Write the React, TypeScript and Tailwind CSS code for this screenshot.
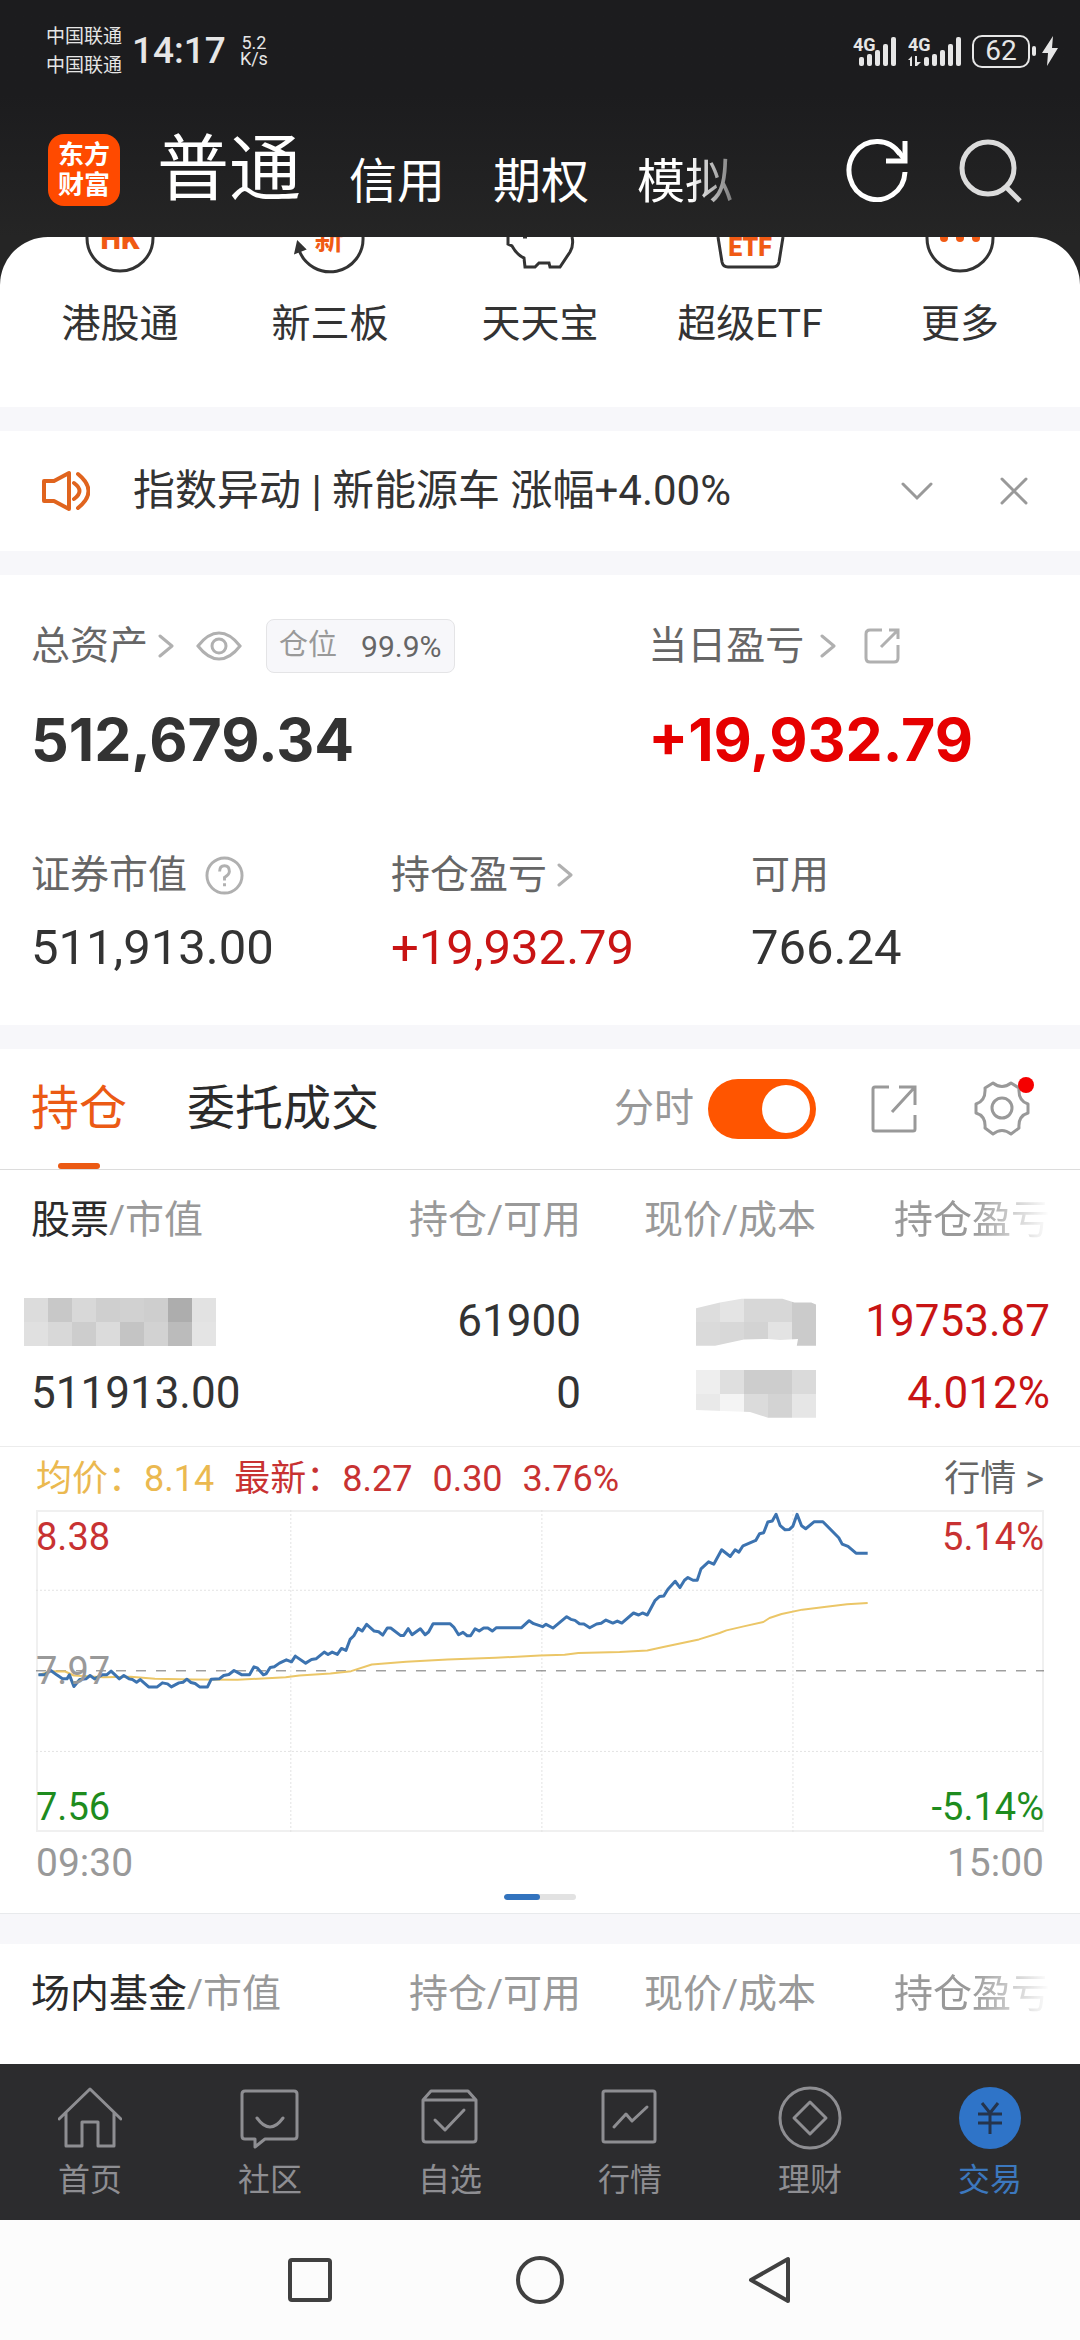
import React, { useState } from 'react';

// --- DATA ---
const accountTabs = ['信用', '期权', '模拟'];

const holdingHeads = ['持仓/可用', '现价/成本', '持仓盈亏'];

const nameMosaic = [
  ['#dcdcdc', '#c8c8c8', '#d8d8d8', '#cfcfcf', '#d1d1d1', '#cecece', '#adadad', '#e2e2e2'],
  ['#e0e0e0', '#d8d8d8', '#cdcdcd', '#dbdbdb', '#c4c4c4', '#d2d2d2', '#bbbbbb', '#e4e4e4'],
];
const priceMosaic = [
  ['#dddddd', '#e4e4e4', '#d7d7d7', '#d7d7d7', '#cbcbcb'],
  ['#dadada', '#d8d8d8', '#d3d3d3', '#e3e3e3', '#cbcbcb'],
];
const costMosaic = [
  ['#eeeeee', '#dfdfdf', '#cdcdcd', '#cdcdcd', '#dadada'],
  ['#e9e9e9', '#f4f4f4', '#dbdbdb', '#d3d3d3', '#e6e6e6'],
];

const pricePoints =
  '112,643 130,643 148,630 165,643 182,655 195,655 202,643 215,678 232,657 250,655 262,645 275,655 297,643 310,643 323,632 347,655 360,645 375,655 385,657 397,665 408,657 432,679 457,679 472,667 487,670 498,679 520,667 532,665 543,656 555,666 567,669 580,679 603,679 614,656 637,655 650,645 665,642 680,630 703,643 725,643 738,619 747,622 765,643 773,640 785,621 797,619 812,608 832,598 847,604 858,587 888,608 905,597 918,595 942,575 953,582 965,575 980,582 992,564 1005,570 1017,537 1028,526 1040,504 1052,512 1065,492 1087,512 1100,514 1112,524 1125,503 1135,503 1163,525 1173,525 1186,505 1197,523 1221,505 1235,523 1245,515 1258,490 1307,490 1318,500 1332,523 1345,516 1357,526 1367,526 1380,505 1392,512 1405,503 1417,503 1430,512 1442,502 1515,502 1537,481 1550,490 1576,499 1586,492 1606,503 1646,469 1658,477 1670,480 1683,490 1696,491 1713,502 1733,491 1746,489 1760,479 1780,488 1793,482 1806,488 1840,458 1855,464 1866,458 1880,464 1903,420 1915,409 1928,407 1940,387 1961,363 1975,382 1988,360 1998,352 2013,360 2025,360 2036,326 2058,305 2073,312 2096,269 2121,289 2135,269 2146,276 2158,257 2195,241 2206,221 2218,218 2230,186 2243,183 2254,163 2266,197 2280,209 2293,208 2303,198 2315,163 2328,197 2340,206 2365,185 2390,185 2436,233 2446,252 2463,259 2486,279 2520,279';

const averagePoints =
  '112,643 148,632 190,633 215,645 300,650 380,649 450,655 560,657 690,658 830,650 870,645 960,639 1020,632 1080,612 1180,604 1300,597 1440,592 1568,585 1640,583 1680,578 1800,575 1880,570 1930,559 2030,537 2090,518 2110,510 2160,498 2217,485 2235,473 2270,461 2330,448 2400,439 2460,432 2520,428';

// --- ICONS ---
const Chevron: React.FC = () => (
  <svg width="16" height="24" viewBox="0 0 16 24" fill="none" stroke="#b0b0b0" strokeWidth="3" strokeLinecap="round" strokeLinejoin="round">
    <path d="M2 2 14 12 2 22" />
  </svg>
);

const SignalIcon: React.FC<{ data?: boolean }> = ({ data }) => (
  <svg width={data ? 54 : 45} height="32" viewBox={data ? '0 0 54 32' : '0 0 45 32'} fill="#e6e6e6">
    <text x="0" y="16" fontSize="18" fontWeight="700" fontFamily="Roboto, sans-serif">4G</text>
    {data && <path d="M0 25 4 21v10H2v-6zM7 21h2v6h4l-4 4H7z" />}
    <g transform={data ? 'translate(10 0)' : undefined}>
      <rect x="6" y="22" width="5" height="9" rx="2" />
      <rect x="14" y="19" width="5" height="12" rx="2" />
      <rect x="22" y="15" width="5" height="16" rx="2" />
      <rect x="30" y="9" width="5" height="22" rx="2" />
      <rect x="38" y="2" width="5" height="29" rx="2" />
    </g>
  </svg>
);

const Mosaic: React.FC<{ rows: string[][]; clip?: string }> = ({ rows, clip }) => (
  <svg
    width={rows[0].length * 24}
    height="48"
    viewBox={`0 0 ${rows[0].length * 24} 48`}
    shapeRendering="crispEdges"
    className={`inline-block align-middle ${clip ?? ''}`}
  >
    {rows.map((row, y) => row.map((fill, x) => (
      <rect key={`${x}-${y}`} x={x * 24} y={y * 24} width="24" height="24" fill={fill} />
    )))}
  </svg>
);

// Lower halves of the shortcut icons, the upper halves are scrolled under the header
const shortcuts = [
  {
    label: '港股通',
    icon: (
      <>
        <circle cx="40" cy="1" r="33" />
        <text x="40" y="12" textAnchor="middle" fontSize="29" fontWeight="900" fontFamily="Roboto, sans-serif" fill="#f05a14" stroke="none">HK</text>
      </>
    ),
  },
  {
    label: '新三板',
    icon: (
      <>
        <path d="M73 0A33 33 0 0 1 9 13" />
        <path d="M8 6 6 15l8-3z" fill="#333" />
        <text x="39" y="13" textAnchor="middle" fontSize="29" fontWeight="700" fontFamily="'Noto Sans CJK SC', sans-serif" fill="#f05a14" stroke="none">新</text>
      </>
    ),
  },
  {
    label: '天天宝',
    icon: <path d="M8 0v7l4 2q5 9 12 12l1 9h10l4-4h10l1 4h10L70 15q4-7 2-15M23 0h4" />,
  },
  {
    label: '超级ETF',
    icon: (
      <>
        <path d="M8 0l4 25q1 5 6 5h45q5 0 6-5l4-25" />
        <text x="40" y="19" textAnchor="middle" fontSize="25" fontWeight="900" fontFamily="Roboto, sans-serif" fill="#f05a14" stroke="none">ETF</text>
      </>
    ),
  },
  {
    label: '更多',
    icon: (
      <>
        <circle cx="40" cy="1" r="33" />
        <g fill="#f05a14" stroke="none">
          <circle cx="24" cy="1" r="4" />
          <circle cx="40" cy="1" r="4" />
          <circle cx="56" cy="1" r="4" />
        </g>
      </>
    ),
  },
];

const navItems = [
  { label: '首页', icon: <path d="M1 33 32 3l31 30M8 27v33h16V36h16v24h16V27" /> },
  {
    label: '社区',
    icon: <path d="M7 5h49q3 0 3 3v42q0 3-3 3H27l-10 8v-8H7q-3 0-3-3V8q0-3 3-3zM19 32q13 18 26 0" />,
  },
  {
    label: '自选',
    icon: <path d="M5 14 13 5h37l8 9v39q0 3-3 3H8q-3 0-3-3zM5 14h53M17 34l10 10 19-20" />,
  },
  {
    label: '行情',
    icon: <path d="M7 5h48q2 0 2 2v47q0 2-2 2H7q-2 0-2-2V7q0-2 2-2zM16 41l12-13 6 7 15-14" />,
  },
  {
    label: '理财',
    icon: (
      <>
        <circle cx="32" cy="32" r="30" />
        <path d="M32 16 48 32 32 48 16 32z" />
      </>
    ),
  },
  {
    label: '交易',
    active: true,
    icon: (
      <>
        <circle cx="32" cy="32" r="31" fill="#2f74c8" stroke="none" />
        <path d="M24 17l8 10 8-10M32 27v21M20 28h24M20 37h24" stroke="#25344c" strokeLinecap="butt" />
      </>
    ),
  },
];

const Divider: React.FC<{ className: string }> = ({ className }) => <div className={`bg-[#f7f7fa] ${className}`}></div>;

// Heading row shared by the stock and the fund tables
const HoldingHead: React.FC<{ name: string }> = ({ name }) => (
  <thead>
    <tr className="text-[39px] leading-[52px] text-[#999]">
      <th scope="col" className="pl-[31px] pt-6 text-left font-normal whitespace-nowrap">
        <span className="text-[#2b2b2b]">{name}</span>/市值
      </th>
      <th scope="col" className="w-[240px] pt-6 text-right font-normal">{holdingHeads[0]}</th>
      <th scope="col" className="w-[235px] pt-6 text-right font-normal">{holdingHeads[1]}</th>
      <th scope="col" className="w-[264px] pt-6 pr-[30px] text-right font-normal whitespace-nowrap">
        <span className="[mask-image:linear-gradient(90deg,#000_50%,transparent_100%)]">{holdingHeads[2]}</span>
      </th>
    </tr>
  </thead>
);

const App: React.FC = () => {
  const [showChart, setShowChart] = useState(true);
  const [showNotice, setShowNotice] = useState(true);

  return (
    <div className="min-h-screen flex flex-col bg-[#252525] text-[#333] font-['Roboto','Noto_Sans_CJK_SC',sans-serif]">
      {/* HEADER */}
      <header className="bg-linear-to-b from-[#1c1c1e] from-40% to-[#252525] text-white">
        <div className="h-[102px] pl-[46px] pr-[22px] flex items-center text-[#e6e6e6]">
          <div className="text-[19px] leading-[29px]">
            <div>中国联通</div>
            <div>中国联通</div>
          </div>
          <div className="ml-2.5 text-[37px] font-medium">14:17</div>
          <div className="ml-3.5 text-[18px] leading-4 text-center">
            <div>5.2</div>
            <div>K/s</div>
          </div>
          <div className="ml-auto flex items-center gap-2.5">
            <SignalIcon />
            <SignalIcon data />
            <div className="flex items-center gap-0.5">
              <div className="w-[58px] h-[33px] rounded-[10px] border-2 border-[#e6e6e6] flex items-center justify-center text-[28px] leading-none">62</div>
              <div className="w-1 h-2.5 rounded-full bg-[#e6e6e6]"></div>
            </div>
            <svg width="16" height="30" viewBox="0 0 16 30" fill="#e6e6e6" className="-ml-1"><path d="M11 0 0 17h6L5 30 16 12h-6z" /></svg>
          </div>
        </div>

        <div className="h-[135px] pl-12 pr-[58px] flex items-center">
          <div className="size-[72px] rounded-2xl bg-[#ff4a00] flex flex-col items-center justify-center text-[26px] leading-[30px] font-bold">
            <span>东方</span>
            <span>财富</span>
          </div>
          <nav className="ml-[37px] pb-[31px] flex-1 self-stretch flex items-end gap-12 leading-none whitespace-nowrap">
            <button className="text-[72px]">普通</button>
            {accountTabs.map((tab) => (
              <button key={tab} className="text-[48px] last:[mask-image:linear-gradient(90deg,#000_55%,#0006_100%)]">{tab}</button>
            ))}
          </nav>
          <button aria-label="刷新">
            <svg width="62" height="64" viewBox="0 0 62 64" fill="none" stroke="#fff" strokeWidth="5">
              <path d="M59 34A28 29 0 1 1 54 16M59 3v20H40" />
              <path d="M52 13l7 9" />
            </svg>
          </button>
          <button aria-label="搜索" className="ml-[51px]">
            <svg width="63" height="66" viewBox="0 0 63 66" fill="none" stroke="#dcdcdc" strokeWidth="5">
              <circle cx="29" cy="31" r="26" />
              <path d="M47 50 61 64" />
            </svg>
          </button>
        </div>
      </header>

      <main className="flex-grow bg-white rounded-t-[48px] overflow-hidden">
        {/* SHORTCUTS */}
        <div className="px-[15px] pb-[58px] grid grid-cols-5">
          {shortcuts.map((item) => (
            <button key={item.label} className="flex flex-col items-center gap-[22px] text-[39px] leading-[50px]">
              <svg width="80" height="40" viewBox="0 0 80 40" fill="none" stroke="#333" strokeWidth="3">{item.icon}</svg>
              <span>{item.label}</span>
            </button>
          ))}
        </div>
        <Divider className="h-6" />

        {/* NOTICE */}
        {showNotice && (
          <>
            <div className="h-[120px] pl-10 pr-[52px] flex items-center">
              <svg width="50" height="44" viewBox="0 0 50 44" fill="none" stroke="#e0641e" strokeWidth="4" strokeLinejoin="round" strokeLinecap="round">
                <path d="M4 12h10L29 4v36l-15-8H4zM34 14q11 8 0 16M38 5q21 17 0 34" />
              </svg>
              <p className="ml-[43px] flex-1 text-[42px] leading-[60px]">指数异动 | 新能源车 涨幅+4.00%</p>
              <button aria-label="展开">
                <svg width="32" height="20" viewBox="0 0 32 20" fill="none" stroke="#999" strokeWidth="3" strokeLinecap="round"><path d="M2 3 16 17 30 3" /></svg>
              </button>
              <button aria-label="关闭" className="ml-[67px]" onClick={() => setShowNotice(false)}>
                <svg width="28" height="28" viewBox="0 0 28 28" fill="none" stroke="#999" strokeWidth="3" strokeLinecap="round"><path d="M2 2 26 26M26 2 2 26" /></svg>
              </button>
            </div>
            <Divider className="h-6" />
          </>
        )}

        {/* ASSETS */}
        <section className="pt-[41px] pb-[37px]">
          <div className="grid grid-cols-[4fr_3fr]">
            <div className="pl-[31px]">
              <div className="h-[60px] flex items-center text-[39px] text-[#666]">
                <a href="#assets" className="flex items-center gap-2.5">总资产 <Chevron /></a>
                <button aria-label="隐藏金额" className="ml-[22px]">
                  <svg width="46" height="30" viewBox="0 0 46 30" fill="none" stroke="#b0b0b0" strokeWidth="3">
                    <path d="M2 15Q12 2 23 2t21 13Q34 28 23 28T2 15z" />
                    <circle cx="23" cy="15" r="7" />
                  </svg>
                </button>
                <div className="ml-6 h-[54px] px-3 rounded-lg border border-[#e4e4e6] bg-[#f7f7fa] flex items-center gap-6 text-[29px] text-[#999]">
                  仓位 <span className="text-[30px] text-[#666]">99.9%</span>
                </div>
              </div>
              <div className="mt-[25px] text-[59px] leading-[78px] font-bold font-['Inter']">512,679.34</div>
            </div>
            <div className="pl-[31px]">
              <div className="h-[60px] flex items-center text-[39px] text-[#666]">
                <a href="#today" className="flex items-center gap-4">当日盈亏 <Chevron /></a>
                <button aria-label="分享盈亏" className="ml-7">
                  <svg width="36" height="36" viewBox="0 0 36 36" fill="none" stroke="#b0b0b0" strokeWidth="3">
                    <path d="M18 2H6Q2 2 2 6v24q0 4 4 4h24q4 0 4-4V17M25 2h9v9M34 2 17 19" />
                  </svg>
                </button>
              </div>
              <div className="mt-[25px] text-[59px] leading-[78px] font-bold font-['Inter'] text-[#e60000]">+19,932.79</div>
            </div>
          </div>

          <div className="mt-[63px] grid grid-cols-3">
            <div className="pl-[31px]">
              <div className="h-[66px] flex items-center text-[39px] text-[#666]">
                证券市值
                <button aria-label="说明" className="ml-[18px]">
                  <svg width="39" height="39" viewBox="0 0 40 40" fill="none" stroke="#b0b0b0" strokeWidth="3">
                    <circle cx="20" cy="20" r="18" />
                    <path d="M15 16q0-6 5-6t5 6q0 3-5 6v3M20 28v3" />
                  </svg>
                </button>
              </div>
              <div className="text-[49px] leading-[80px]">511,913.00</div>
            </div>
            <div className="pl-[31px]">
              <div className="h-[66px] flex items-center text-[39px] text-[#666]">
                <a href="#profit" className="flex items-center gap-2.5">持仓盈亏 <Chevron /></a>
              </div>
              <div className="text-[49px] leading-[80px] text-[#c81414]">+19,932.79</div>
            </div>
            <div className="pl-[31px]">
              <div className="h-[66px] flex items-center text-[39px] text-[#666]">可用</div>
              <div className="text-[49px] leading-[80px]">766.24</div>
            </div>
          </div>
        </section>
        <Divider className="h-6" />

        {/* HOLDING TABS */}
        <div className="h-[121px] pl-[31px] pr-[50px] flex items-stretch border-b border-[#dcdcdc]">
          <button className="pt-1.5 flex flex-col items-center justify-between text-[48px] leading-[108px] text-[#eb5a14]">
            持仓
            <span className="w-[42px] h-1.5 rounded-full bg-[#eb5a14]"></span>
          </button>
          <button className="ml-[60px] text-[48px] text-[#2b2b2b]">委托成交</button>
          <label htmlFor="minute-chart" className="ml-auto self-center text-[40px] text-[#999]">分时</label>
          <input
            id="minute-chart"
            type="checkbox"
            checked={showChart}
            onChange={(e) => setShowChart(e.target.checked)}
            className="appearance-none self-center ml-3.5 w-[108px] h-[60px] px-1.5 rounded-full flex items-center justify-start bg-gray-300 checked:justify-end checked:bg-[#ff5500] before:block before:size-12 before:rounded-full before:bg-white before:content-['']"
          />
          <button aria-label="分享持仓" className="ml-[55px]">
            <svg width="46" height="48" viewBox="0 0 46 48" fill="none" stroke="#999" strokeWidth="3">
              <path d="M18 2H4Q2 2 2 4v40q0 2 2 2h38q2 0 2-2V30M28 2h16v18M43 3 21 27" />
            </svg>
          </button>
          <button aria-label="设置" className="relative ml-[57px] self-center">
            <svg width="56" height="56" viewBox="0 0 56 56" fill="none" stroke="#999" strokeWidth="3" strokeLinejoin="round">
              <path d="M19 2q9 7 18 0l8 5q-1 13 9 16v9q-10 3-9 15l-8 6q-9-7-18 0l-8-6q1-12-9-15v-9q10-3 9-16z" />
              <circle cx="28" cy="27" r="10" />
            </svg>
            <span className="absolute -top-1 -right-1 size-4 rounded-full bg-[#f50000]"></span>
          </button>
        </div>

        {/* STOCK HOLDINGS */}
        <div className="pb-[17px] border-b border-[#ececec]">
          <table className="w-full table-fixed">
            <HoldingHead name="股票" />
            <tbody className="text-[44px] leading-[72px] [&_td]:p-0">
              <tr>
                <td className="h-[111px] pl-6! pt-[39px]! leading-none"><Mosaic rows={nameMosaic} /></td>
                <td className="pt-[39px]! text-right">61900</td>
                <td className="pt-[39px]! text-right leading-none">
                  <Mosaic rows={priceMosaic} clip="[clip-path:polygon(0_22%,20%_10%,38%_2%,72%_2%,82%_10%,96%_10%,100%_14%,100%_100%,84%_100%,85%_86%,70%_88%,60%_86%,40%_87%,16%_100%,0_100%)]" />
                </td>
                <td className="pt-[39px]! pr-[30px]! text-right text-[#c81414]">19753.87</td>
              </tr>
              <tr>
                <td className="h-[72px] pl-[31px]!">511913.00</td>
                <td className="text-right">0</td>
                <td className="text-right leading-none">
                  <Mosaic rows={costMosaic} clip="[clip-path:polygon(0_0,100%_0,100%_100%,60%_100%,45%_88%,0_84%)]" />
                </td>
                <td className="pr-[30px]! text-right text-[#c81414]">4.012%</td>
              </tr>
            </tbody>
          </table>
        </div>

        {/* MINUTE CHART */}
        {showChart && (
          <section className="px-9 pb-[13px] border-b border-[#e8eaec]">
            <div className="h-[63px] flex items-center gap-5 text-[36px] text-[#c83232]">
              <span className="text-[#ebb950]">均价：8.14</span>
              <span>最新：8.27</span>
              <span>0.30</span>
              <span>3.76%</span>
              <a href="#quote" className="ml-auto text-[#666]">行情 &gt;</a>
            </div>
            <div className="relative h-[322px] ring-2 ring-inset ring-[#f0f0f0] text-[38px] leading-[50px]">
              <svg className="block w-full h-full" viewBox="105 150 2927 963" preserveAspectRatio="none" fill="none" strokeWidth="1">
                <path d="M105 390H3032M105 872H3032M845 150V1113M1574 150V1113M2303 150V1113" stroke="#e2e2e2" strokeDasharray="2 2" vectorEffect="non-scaling-stroke" />
                <path d="M105 631H3032" stroke="#707070" strokeDasharray="10 10" vectorEffect="non-scaling-stroke" shapeRendering="crispEdges" />
                <polyline points={averagePoints} stroke="#ebc667" strokeWidth="2" strokeLinejoin="round" vectorEffect="non-scaling-stroke" />
                <polyline points={pricePoints} stroke="#3c73b0" strokeWidth="3" strokeLinejoin="round" vectorEffect="non-scaling-stroke" />
              </svg>
              <span className="absolute left-0 top-0.5 text-[#c83232]">8.38</span>
              <span className="absolute right-0 top-0.5 text-[#c83232]">5.14%</span>
              <span className="absolute left-0 top-[136px] text-[#999]">7.97</span>
              <span className="absolute left-0 bottom-0 text-[#1e8c1e]">7.56</span>
              <span className="absolute right-0 bottom-0 text-[#1e8c1e]">-5.14%</span>
            </div>
            <div className="h-[62px] flex items-center justify-between text-[39px] text-[#999]">
              <span>09:30</span>
              <span>15:00</span>
            </div>
            <div className="mx-auto w-[72px] h-1.5 rounded-full overflow-hidden flex bg-[#e2e2e2]">
              <span className="w-1/2 rounded-full bg-[#3273be]"></span>
            </div>
          </section>
        )}
        <Divider className="h-[30px]" />

        {/* FUND HOLDINGS */}
        <div className="pb-[43px]">
          <table className="w-full table-fixed">
            <HoldingHead name="场内基金" />
          </table>
        </div>
      </main>

      {/* BOTTOM NAV */}
      <nav className="h-[156px] grid grid-cols-6 bg-[#2c2c2e] text-[32px] leading-10">
        {navItems.map((item) => (
          <a key={item.label} href={`#${item.label}`} className={`pt-[22px] flex flex-col items-center gap-2.5 ${item.active ? 'text-[#3c78be]' : 'text-[#8e8e92]'}`}>
            <svg width="64" height="64" viewBox="0 0 64 64" fill="none" stroke="currentColor" strokeWidth="3" strokeLinejoin="round" strokeLinecap="round">{item.icon}</svg>
            <span>{item.label}</span>
          </a>
        ))}
      </nav>

      {/* SYSTEM BUTTONS */}
      <div className="h-[120px] flex items-center justify-center gap-[182px] bg-[#fcfcfc]">
        <button aria-label="最近任务">
          <svg width="48" height="48" viewBox="0 0 48 48" fill="none" stroke="#404040" strokeWidth="4"><rect x="4" y="4" width="40" height="40" rx="2" /></svg>
        </button>
        <button aria-label="主屏幕">
          <svg width="48" height="48" viewBox="0 0 48 48" fill="none" stroke="#404040" strokeWidth="4"><circle cx="24" cy="24" r="22" /></svg>
        </button>
        <button aria-label="返回">
          <svg width="48" height="48" viewBox="0 0 48 48" fill="none" stroke="#404040" strokeWidth="4" strokeLinejoin="round"><path d="M42 3v42L5 24z" /></svg>
        </button>
      </div>
    </div>
  );
};

export default App;
